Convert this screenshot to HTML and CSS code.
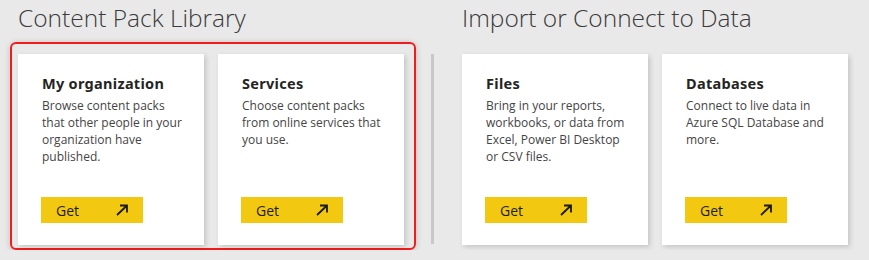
FILE: index.html
```html
<!DOCTYPE html>
<html lang="en">
<head>
  <meta charset="UTF-8" />
  <meta name="viewport" content="width=device-width, initial-scale=1" />
  <title>Get Data</title>
  <link rel="stylesheet" href="styles.css">
</head>
<body>

  <div class="page">
    <section class="group">
      <h2 class="group-title">Content Pack Library</h2>
      <div class="cards highlight">
        <div class="card">
          <h3 class="card-title">My organization</h3>
          <p class="card-text">Browse content packs that other people in your organization have published.</p>
          <button class="get-button">Get
            <svg class="arrow" width="14" height="12" viewBox="0 0 14 12"><path d="M2 11 L12 1.5 M5 1.5 H12 V8.5" /></svg>
          </button>
        </div>
        <div class="card">
          <h3 class="card-title">Services</h3>
          <p class="card-text">Choose content packs from online services that you use.</p>
          <button class="get-button">Get
            <svg class="arrow" width="14" height="12" viewBox="0 0 14 12"><path d="M2 11 L12 1.5 M5 1.5 H12 V8.5" /></svg>
          </button>
        </div>
      </div>
    </section>

    <div class="divider"></div>

    <section class="group">
      <h2 class="group-title">Import or Connect to Data</h2>
      <div class="cards plain">
        <div class="card">
          <h3 class="card-title">Files</h3>
          <p class="card-text">Bring in your reports, workbooks, or data from Excel, Power BI Desktop or CSV files.</p>
          <button class="get-button">Get
            <svg class="arrow" width="14" height="12" viewBox="0 0 14 12"><path d="M2 11 L12 1.5 M5 1.5 H12 V8.5" /></svg>
          </button>
        </div>
        <div class="card">
          <h3 class="card-title">Databases</h3>
          <p class="card-text">Connect to live data in Azure SQL Database and more.</p>
          <button class="get-button">Get
            <svg class="arrow" width="14" height="12" viewBox="0 0 14 12"><path d="M2 11 L12 1.5 M5 1.5 H12 V8.5" /></svg>
          </button>
        </div>
      </div>
    </section>
  </div>

</body>
</html>
```

FILE: styles.css
```css
body {
  font-family: 'Open Sans', 'Noto Sans', sans-serif;
  background: #e9e9e9;
  margin: 0;
  padding: 0;
  overflow: hidden;
}

.page {
  display: flex;
  align-items: flex-start;
  padding-left: 10px;
}

.group-title {
  font-family: 'Open Sans', 'Lato', sans-serif;
  font-weight: 300;
  font-size: 24.5px;
  line-height: 30px;
  color: #3a3a3a;
  margin: 3px 0 9px;
  white-space: nowrap;
}

.group:first-child .group-title {
  margin-left: 8px;
}

.cards {
  display: flex;
  gap: 14px;
}

.highlight {
  border: 2px solid #f21c1c;
  border-radius: 6px;
  padding: 10px 10px 3px 6px;
  box-shadow: 0 1px 6px rgba(0, 0, 0, 0.18);
}

.plain {
  padding-top: 12px;
}

.divider {
  width: 3px;
  height: 190px;
  background: #c8c8c8;
  margin: 54px 28px 0 15px;
}

.card {
  width: 186px;
  height: 191px;
  box-sizing: border-box;
  background: #fff;
  padding: 19px 18px 22px 24px;
  display: flex;
  flex-direction: column;
  align-items: flex-start;
  box-shadow: 2px 2px 5px rgba(0, 0, 0, 0.16);
}

.card-title {
  font-family: 'Noto Sans', sans-serif;
  font-weight: 700;
  font-size: 14.5px;
  letter-spacing: 0.3px;
  line-height: 20px;
  color: #252423;
  margin: 0;
}

.card-text {
  font-size: 12px;
  line-height: 17px;
  color: #444;
  margin: 4px 0 0;
}

.get-button {
  margin-top: auto;
  margin-left: -1px;
  width: 102px;
  height: 26px;
  background: #f2c811;
  border: none;
  border-radius: 0;
  padding: 0 14px 0 15px;
  display: flex;
  align-items: center;
  justify-content: space-between;
  font-family: 'Open Sans', sans-serif;
  font-size: 14px;
  color: #1e1e1e;
  cursor: pointer;
}

.arrow path {
  fill: none;
  stroke: #1a1a1a;
  stroke-width: 1.8;
}
```
